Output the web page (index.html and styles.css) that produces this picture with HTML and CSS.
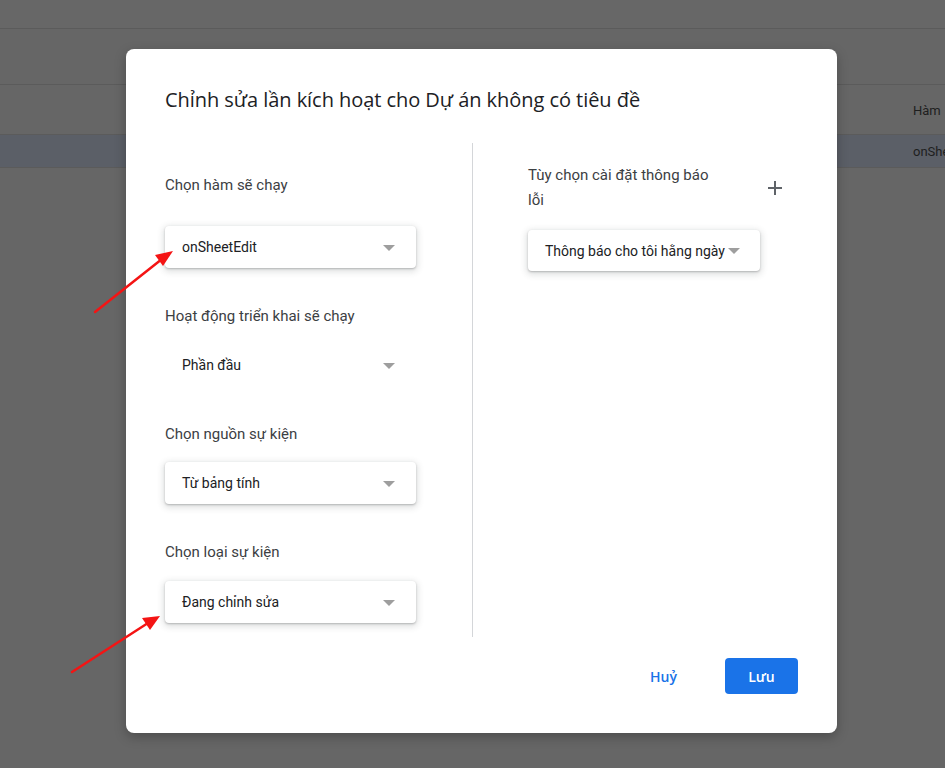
FILE: index.html
```html
<!DOCTYPE html>
<html lang="vi">
<head>
<meta charset="utf-8">
<title>Chỉnh sửa lần kích hoạt</title>
<link rel="stylesheet" href="styles.css">
</head>
<body>
<div class="page">
  <div class="bar bar-top"></div>
  <div class="bar bar-tools"></div>
  <div class="row row-head"><span class="cell">Hàm</span></div>
  <div class="row row-sel"><span class="cell">onSheetEdit</span></div>
</div>

<div class="overlay">
  <div class="dialog">
    <h1 class="title">Chỉnh sửa lần kích hoạt cho Dự án không có tiêu đề</h1>
    <div class="body">
      <div class="col-left">
        <div class="label l1">Chọn hàm sẽ chạy</div>
        <div class="select raised s1"><span>onSheetEdit</span><i class="caret"></i></div>

        <div class="label l2">Hoạt động triển khai sẽ chạy</div>
        <div class="select flat s2"><span>Phần đầu</span><i class="caret"></i></div>

        <div class="label l3">Chọn nguồn sự kiện</div>
        <div class="select raised s3"><span>Từ bảng tính</span><i class="caret"></i></div>

        <div class="label l4">Chọn loại sự kiện</div>
        <div class="select raised s4"><span>Đang chỉnh sửa</span><i class="caret"></i></div>
      </div>
      <div class="divider"></div>
      <div class="col-right">
        <div class="notify-head">
          <div class="notify-label">Tùy chọn cài đặt thông báo lỗi</div>
          <svg class="plus" width="16" height="16" viewBox="0 0 16 16"><path d="M8 1v14M1 8h14" stroke="#5f6368" stroke-width="2" fill="none"/></svg>
        </div>
        <div class="select raised compact"><span>Thông báo cho tôi hằng ngày</span><i class="caret"></i></div>
      </div>
    </div>
    <div class="footer">
      <button class="btn btn-text">Huỷ</button>
      <button class="btn btn-primary">Lưu</button>
    </div>
  </div>
</div>

<svg class="annot" width="945" height="768" viewBox="0 0 945 768">
  <line x1="95" y1="312" x2="162" y2="259" stroke="#f41414" stroke-width="2.5" stroke-linecap="round"/>
  <polygon points="173,251 155,255 163,266" fill="#f41414"/>
  <line x1="72" y1="672" x2="148" y2="623" stroke="#f41414" stroke-width="2.5" stroke-linecap="round"/>
  <polygon points="160,616 142,618 150,630" fill="#f41414"/>
</svg>
</body>
</html>
```
FILE: styles.css
```css
* { box-sizing: border-box; }
html, body { margin: 0; padding: 0; }
body {
  width: 945px;
  height: 768px;
  overflow: hidden;
  background: #666666;
  font-family: Roboto, "Liberation Sans", Arial, sans-serif;
  position: relative;
}

.page { width: 100%; }
.bar { border-bottom: 1px solid #5b5b5b; }
.bar-top { height: 29px; background: #676767; }
.bar-tools { height: 56px; background: #666666; }
.row {
  display: flex;
  justify-content: flex-end;
  align-items: center;
  border-bottom: 1px solid #5b5b5b;
  font-size: 13px;
  color: #1e1e1e;
}
.row-head { height: 50px; background: #666666; padding-top: 2px; }
.row-sel { height: 33px; background: #5b5f67; }
.cell { width: 32px; white-space: nowrap; overflow: hidden; }

.overlay {
  position: absolute;
  left: 0; top: 0;
  width: 945px; height: 768px;
}
.dialog {
  position: absolute;
  left: 126px;
  top: 49px;
  width: 711px;
  height: 684px;
  background: #ffffff;
  border-radius: 8px;
  box-shadow: 0 4px 12px rgba(0,0,0,0.25);
  padding: 37px 39px 39px 39px;
  display: flex;
  flex-direction: column;
}
.title {
  margin: 0;
  font-family: "Open Sans", Roboto, sans-serif;
  font-weight: 400;
  font-size: 20px;
  line-height: 28px;
  color: #202124;
  letter-spacing: -0.05px;
}
.body {
  display: flex;
  margin-top: 29px;
  height: 494px;
}
.col-left {
  width: 307px;
  display: flex;
  flex-direction: column;
  padding-top: 30px;
}
.divider {
  width: 1px;
  background: #d4d6d9;
}
.col-right {
  flex: 1;
  padding-left: 55px;
  padding-top: 20px;
  display: flex;
  flex-direction: column;
  align-items: flex-start;
}

.label {
  font-size: 15px;
  line-height: 24px;
  color: #3c4043;
}
.l2, .l3, .l4 { margin-top: 36px; }

.select {
  height: 42px;
  display: flex;
  align-items: center;
  justify-content: space-between;
  padding: 0 21px 0 17px;
  font-size: 14px;
  color: #202124;
  border-radius: 4px;
  background: #fff;
}
.raised {
  box-shadow: 0 1px 2px rgba(60,64,67,0.3), 0 2px 6px 2px rgba(60,64,67,0.15);
}
.col-left .select { width: 251px; }
.s1 { margin-top: 29px; }
.s2 { margin-top: 16px; }
.s3 { margin-top: 16px; }
.s4 { margin-top: 17px; }

.caret {
  width: 0; height: 0;
  border-left: 6px solid transparent;
  border-right: 6px solid transparent;
  border-top: 6px solid #9e9e9e;
  margin-top: 1px;
}

.notify-head {
  width: 100%;
  display: flex;
  justify-content: space-between;
  align-items: center;
}
.notify-label {
  width: 190px;
  font-size: 15px;
  line-height: 25px;
  color: #3c4043;
}
.plus { margin-right: 15px; margin-top: -1px; }

.compact {
  margin-top: 17px;
  height: 41px;
  width: 232px;
  padding-right: 20px;
}
.compact .caret { margin-left: 3px; }

.footer {
  display: flex;
  justify-content: flex-end;
  align-items: center;
  margin-top: 21px;
  gap: 36px;
}
.btn {
  font-family: "Open Sans", Roboto, sans-serif;
  font-size: 14px;
  font-weight: 600;
  border: none;
  border-radius: 4px;
  height: 36px;
  cursor: pointer;
}
.btn-text {
  background: transparent;
  color: #1a73e8;
  padding: 0 12px;
}
.btn-primary {
  background: #1a73e8;
  color: #fff;
  width: 73px;
}

.annot {
  position: absolute;
  left: 0; top: 0;
  pointer-events: none;
}
```
